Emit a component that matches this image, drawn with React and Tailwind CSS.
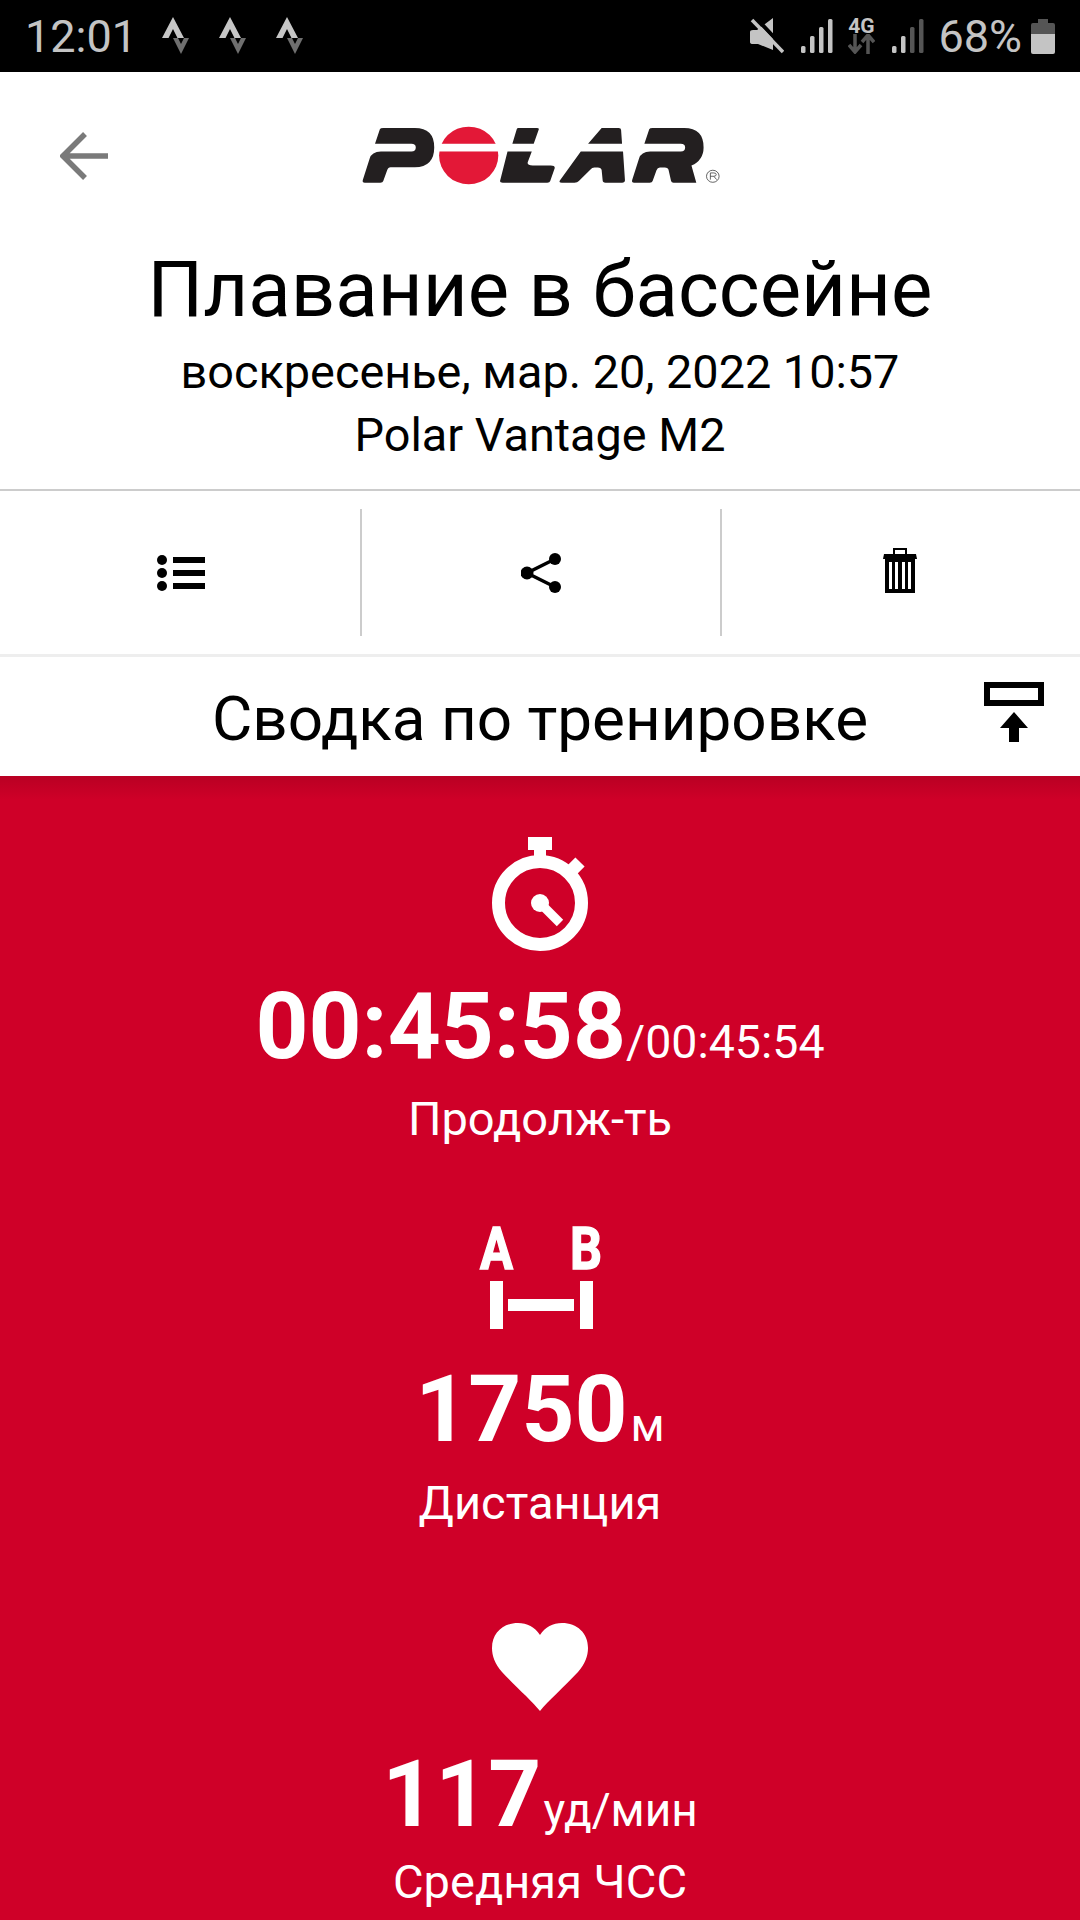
const StravaIcon = () => (
  <svg width="30" height="40" viewBox="0 0 30 40" className="shrink-0">
    <path d="M12 0 L23 21 H16.5 L12 12 L7.5 21 H1 Z" fill="#c6c6c6" />
    <path d="M12 21 L28 21 L20 37 Z M17 21 L20 27 L23 21 Z" fill="#6f6f6f" fillRule="evenodd" />
  </svg>
);

const MuteIcon = () => (
  <svg width="34" height="36" viewBox="0 0 34 36" className="shrink-0">
    <path d="M0 14 Q0 12 3 12 H7 L23 0 V32 L8 26 H3 Q0 26 0 24 Z" fill="#c4c4c4" />
    <path d="M6 0 L36 32" stroke="#000" strokeWidth="4" />
    <path d="M2 2 L33 34" stroke="#c4c4c4" strokeWidth="3.5" />
  </svg>
);

const Signal = ({ weak }) => (
  <svg width="32" height="34" viewBox="0 0 32 34" className="shrink-0">
    <rect x="0" y="27" width="4.5" height="7" rx="1.5" fill="#c4c4c4" />
    <rect x="9" y="17" width="4.5" height="17" rx="1.5" fill="#c4c4c4" />
    <rect x="18" y="8" width="4.5" height="26" rx="1.5" fill={weak ? '#555' : '#c4c4c4'} />
    <rect x="27" y="0" width="4.5" height="34" rx="1.5" fill={weak ? '#555' : '#c4c4c4'} />
  </svg>
);

const NetworkIcon = () => (
  <div className="flex flex-col items-center w-[28px] shrink-0">
    <span className="text-[21px] leading-[15px] font-bold text-[#c4c4c4]">4G</span>
    <svg width="27" height="20" viewBox="0 0 27 20">
      <path d="M7 0 V17 M1 11 L7 18 L13 11" stroke="#555" strokeWidth="3.5" fill="none" />
      <path d="M20 20 V2 M14 8 L20 1 L26 8" stroke="#555" strokeWidth="3.5" fill="none" />
    </svg>
  </div>
);

const BatteryIcon = () => (
  <svg width="24" height="35" viewBox="0 0 24 35" className="shrink-0">
    <path d="M7 0 H17 V4 H22 Q24 4 24 6 V15 H0 V6 Q0 4 2 4 H7 Z" fill="#555" />
    <path d="M0 15 H24 V33 Q24 35 22 35 H2 Q0 35 0 33 Z" fill="#c4c4c4" />
  </svg>
);

const PolarLogo = () => (
  <svg width="364" height="62" viewBox="740 105 750 185" preserveAspectRatio="none" className="shrink-0">
    <path d="M790 114 H855 Q895 114 895 172 Q895 230 855 231 H805 Q800 231 798 240 L790 272 Q789 277 784 277 H752 Q746 277 748 268 L762 205 Q766 185 785 184 H848 Q857 184 857 172 Q857 161 848 161 H773 L783 118 Q784 114 790 114 Z" fill="#231f20" />
    <ellipse cx="966" cy="196" rx="61" ry="86" fill="#e31837" />
    <rect x="900" y="161" width="132" height="23" fill="#fff" />
    <path d="M1068 114 H1107 Q1112 114 1110 120 L1100 161 H1056 L1065 118 Q1066 114 1068 114 Z" fill="#231f20" />
    <path d="M1046 184 H1096 L1088 215 Q1085 226 1098 226 H1135 Q1145 226 1143 235 L1134 272 Q1133 277 1128 277 H1036 Q1029 277 1031 270 Z" fill="#231f20" />
    <path d="M1240 114 H1275 Q1280 114 1280 120 L1282 161 H1212 Z" fill="#231f20" />
    <path d="M1197 184 H1284 L1288 270 Q1288 277 1282 277 H1248 Q1242 277 1242 270 L1240 240 Q1239 232 1232 232 H1225 Q1220 232 1217 238 L1193 272 Q1190 277 1184 277 H1158 Q1150 277 1155 268 Z" fill="#231f20" />
    <path d="M1345 114 H1410 Q1450 114 1450 172 Q1450 210 1425 226 L1435 277 H1388 Q1384 277 1383 272 L1378 240 Q1377 232 1370 232 H1360 Q1355 232 1353 240 L1345 272 Q1344 277 1339 277 H1307 Q1301 277 1303 268 L1317 205 Q1321 185 1340 184 H1403 Q1412 184 1412 172 Q1412 161 1403 161 H1328 L1338 118 Q1339 114 1345 114 Z" fill="#231f20" />
    <ellipse cx="1469" cy="258" rx="13" ry="18" fill="none" stroke="#444" strokeWidth="2" />
    <path d="M1464 268 V248 H1471 Q1476 248 1476 253 Q1476 258 1471 258 H1464 M1471 258 L1477 268" fill="none" stroke="#444" strokeWidth="2" />
  </svg>
);

const BackArrow = () => (
  <svg width="48" height="48" viewBox="0 0 48 48" className="shrink-0">
    <path d="M25 2 L3 24 L25 46 M3 24 H48" fill="none" stroke="#7a7a7a" strokeWidth="5.5" />
  </svg>
);

const ListIcon = () => (
  <svg width="48" height="38" viewBox="0 0 48 38">
    <circle cx="5" cy="6" r="5" />
    <circle cx="5" cy="19" r="5" />
    <circle cx="5" cy="32" r="5" />
    <rect x="16" y="3" width="32" height="6" />
    <rect x="16" y="16" width="32" height="6" />
    <rect x="16" y="29" width="32" height="6" />
  </svg>
);

const ShareIcon = () => (
  <svg width="40" height="40" viewBox="0 0 40 40">
    <circle cx="34" cy="6" r="6" />
    <circle cx="6" cy="20" r="6.5" />
    <circle cx="34" cy="34" r="6" />
    <path d="M34 6 L6 20 L34 34" fill="none" stroke="#000" strokeWidth="3.5" />
  </svg>
);

const TrashIcon = () => (
  <svg width="34" height="46" viewBox="0 0 34 46">
    <path d="M11 7 V2 H23 V7" fill="none" stroke="#000" strokeWidth="2" />
    <path d="M1 7 H33 L34 12 H0 Z" />
    <path d="M2 12 H32 V46 H2 Z M6 15 V42 H9 V15 Z M12 15 V42 H15 V15 Z M19 15 V42 H22 V15 Z M25 15 V42 H28 V15 Z" fillRule="evenodd" />
  </svg>
);

const CollapseIcon = () => (
  <svg width="60" height="60" viewBox="0 0 60 60">
    <rect x="3" y="3" width="54" height="18" fill="none" stroke="#000" strokeWidth="6" />
    <path d="M30 30 L44 46 H35 V60 H25 V46 H16 Z" />
  </svg>
);

const StopwatchIcon = () => (
  <svg width="96" height="114" viewBox="0 0 96 114" className="block">
    <rect x="36" y="0" width="24" height="13" fill="#fff" />
    <rect x="42" y="12" width="12" height="8" fill="#fff" />
    <path d="M79 34 L88 25" stroke="#fff" strokeWidth="13" />
    <circle cx="48" cy="66" r="41.5" fill="none" stroke="#fff" strokeWidth="13" />
    <circle cx="48" cy="66" r="9" fill="#fff" />
    <path d="M48 66 L68 86" stroke="#fff" strokeWidth="9" />
  </svg>
);

const DistanceIcon = () => (
  <svg width="120" height="118" viewBox="0 -16 120 118" className="block overflow-visible">
    <text x="0" y="42" textLength="33" lengthAdjust="spacingAndGlyphs" fontSize="60" fontWeight="700" fontFamily="Roboto, sans-serif" fill="#fff" stroke="#fff" strokeWidth="1.5">A</text>
    <text x="90" y="42" textLength="32" lengthAdjust="spacingAndGlyphs" fontSize="60" fontWeight="700" fontFamily="Roboto, sans-serif" fill="#fff" stroke="#fff" strokeWidth="1.5">B</text>
    <rect x="10" y="54" width="13" height="48" fill="#fff" />
    <rect x="28" y="72" width="66" height="12" fill="#fff" />
    <rect x="100" y="54" width="13" height="48" fill="#fff" />
  </svg>
);

const HeartIcon = () => (
  <svg width="96" height="88" viewBox="0 0 96 88" className="block">
    <path d="M48 88 C40 78 24 64 10 49 C3 41 0 33 0 25 C0 10 11 0 26 0 C35 0 43 4 48 12 C53 4 61 0 70 0 C85 0 96 10 96 25 C96 33 93 41 86 49 C72 64 56 78 48 88 Z" fill="#fff" />
  </svg>
);

const Metric = ({ icon, value, unit, unitClass, label, iconClass, valueClass, labelClass }) => (
  <div className="flex flex-col items-center">
    <div className={iconClass}>{icon}</div>
    <div className={`flex items-baseline justify-center leading-none ${valueClass}`}>
      <span className="text-[92.5px] font-bold leading-none">{value}</span>
      <span className={unitClass}>{unit}</span>
    </div>
    <div className={`text-[47px] leading-[54px] ${labelClass}`}>{label}</div>
  </div>
);

export default function App() {
  return (
    <div className="w-[1080px] h-[1920px] overflow-hidden bg-white flex flex-col font-['Roboto',sans-serif] text-black">
      {/* Status bar */}
      <div className="h-[72px] bg-black flex items-center justify-between pl-[25px] pr-[25px] text-[#c4c4c4]">
        <div className="flex items-center">
          <span className="text-[45px] leading-none w-[136px]">12:01</span>
          <div className="flex gap-[27px] mt-[2px]">
            <StravaIcon />
            <StravaIcon />
            <StravaIcon />
          </div>
        </div>
        <div className="flex items-center">
          <MuteIcon />
          <div className="ml-[17px]"><Signal /></div>
          <div className="ml-[14px]"><NetworkIcon /></div>
          <div className="ml-[17px]"><Signal weak /></div>
          <span className="text-[45px] leading-none ml-[14px]">68%</span>
          <div className="ml-[9px]"><BatteryIcon /></div>
        </div>
      </div>

      {/* Header */}
      <div className="h-[120px] flex items-center pl-[60px] pt-[48px]">
        <BackArrow />
        <div className="ml-[251px]"><PolarLogo /></div>
      </div>
      <div className="h-[299px] flex flex-col items-center border-b-2 border-[#cccccc]">
        <h1 className="text-[78px] leading-none font-normal mt-[59px]">Плавание в бассейне</h1>
        <div className="text-[46.8px] leading-none mt-[20px]">воскресенье, мар. 20, 2022 10:57</div>
        <div className="text-[46.8px] leading-none mt-[16px]">Polar Vantage M2</div>
      </div>

      {/* Actions */}
      <div className="h-[166px] grid grid-cols-[362px_360px_1fr] items-center border-b-[3px] border-[#eeeeee]">
        <div className="flex items-center justify-center h-[127px] pl-[2px] border-r-2 border-[#cccccc]"><ListIcon /></div>
        <div className="flex items-center justify-center h-[127px] border-r-2 border-[#cccccc]"><ShareIcon /></div>
        <div className="flex items-center justify-center h-[127px] pb-[6px] pr-[3px]"><TrashIcon /></div>
      </div>

      {/* Summary title */}
      <div className="h-[119px] flex items-center justify-center relative pt-[4px]">
        <span className="text-[62px] leading-none">Сводка по тренировке</span>
        <div className="absolute left-[984px] top-[25px]"><CollapseIcon /></div>
      </div>

      {/* Summary */}
      <div className="flex-1 bg-[#cf0028] bg-gradient-to-b from-[#b90023] to-[#cf0028] to-[24px] text-white pt-[61px] flex flex-col">
        <Metric
          icon={<StopwatchIcon />}
          value="00:45:58"
          unit="/00:45:54"
          unitClass="text-[46.5px]"
          label="Продолж-ть"
          valueClass="mt-[30px]"
          labelClass="mt-[18px]"
        />
        <Metric
          icon={<DistanceIcon />}
          value="1750"
          unit="м"
          unitClass="text-[46px] ml-[3px]"
          label="Дистанция"
          iconClass="mt-[65px]"
          valueClass="mt-[35px]"
          labelClass="mt-[20px]"
        />
        <Metric
          icon={<HeartIcon />}
          value="117"
          unit="уд/мин"
          unitClass="text-[46px] ml-[2px]"
          label="Средняя ЧСС"
          iconClass="mt-[93px]"
          valueClass="mt-[38px]"
          labelClass="mt-[13px]"
        />
      </div>
    </div>
  );
}
